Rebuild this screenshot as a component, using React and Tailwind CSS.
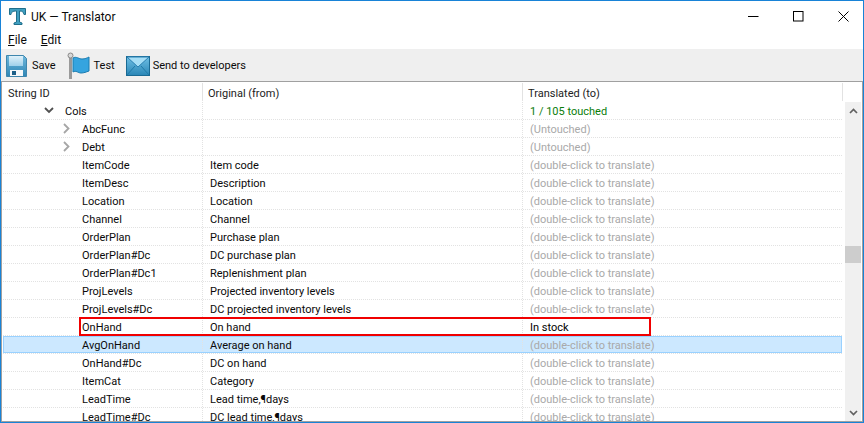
import React from "react";

const rows = [
  { id: "Cols", orig: "", tr: "1 / 105 touched", indent: "pl-[62px]", chev: "down", kind: "green" },
  { id: "AbcFunc", orig: "", tr: "(Untouched)", chev: "right" },
  { id: "Debt", orig: "", tr: "(Untouched)", chev: "right" },
  { id: "ItemCode", orig: "Item code" },
  { id: "ItemDesc", orig: "Description" },
  { id: "Location", orig: "Location" },
  { id: "Channel", orig: "Channel" },
  { id: "OrderPlan", orig: "Purchase plan" },
  { id: "OrderPlan#Dc", orig: "DC purchase plan" },
  { id: "OrderPlan#Dc1", orig: "Replenishment plan" },
  { id: "ProjLevels", orig: "Projected inventory levels" },
  { id: "ProjLevels#Dc", orig: "DC projected inventory levels" },
  { id: "OnHand", orig: "On hand", tr: "In stock", kind: "done" },
  { id: "AvgOnHand", orig: "Average on hand", selected: true },
  { id: "OnHand#Dc", orig: "DC on hand" },
  { id: "ItemCat", orig: "Category" },
  { id: "LeadTime", orig: "Lead time,¶days" },
  { id: "LeadTime#Dc", orig: "DC lead time,¶days" },
];

function Chevron({ dir }) {
  if (dir === "down")
    return (
      <svg width="10" height="7" viewBox="0 0 10 7" className="absolute left-[41px] top-[5px]">
        <path d="M1 1l4 4 4-4" fill="none" stroke="#505050" strokeWidth="1.8" />
      </svg>
    );
  return (
    <svg width="7" height="11" viewBox="0 0 7 11" className="absolute left-[60px] top-[3px]">
      <path d="M1 1l4.500 4.500L1 10" fill="none" stroke="#a6a6a6" strokeWidth="1.8" />
    </svg>
  );
}

function Row({ r }) {
  const trClass =
    r.kind === "green" ? "text-[#0a7d0a]" : r.kind === "done" ? "text-black" : "text-[#a9a9a9]";
  return (
    <div className="relative h-[18px] w-[839px] shrink-0 border-b border-dotted border-[#e2e2e2]">
      <div
        className={
          "flex h-full items-center " +
          (r.selected ? "bg-[#cce8ff] outline outline-1 -outline-offset-1 outline-[#99d1ff]" : "")
        }
      >
        <div className={"relative flex h-full w-[199px] shrink-0 items-center pt-[2px] " + (r.indent || "pl-[79px]")}>
          {r.chev && <Chevron dir={r.chev} />}
          <span>{r.id}</span>
        </div>
        <div className="flex h-full w-[320px] shrink-0 items-center border-l border-dotted border-[#e2e2e2] pl-[7px] pt-[2px]">
          {r.orig}
        </div>
        <div className={"flex h-full w-[320px] shrink-0 items-center border-l border-dotted border-[#e2e2e2] pl-[7px] pt-[2px] " + trClass}>
          {r.tr || "(double-click to translate)"}
        </div>
      </div>
      {r.kind === "done" && (
        <div className="pointer-events-none absolute left-[76px] top-[-1px] h-[19px] w-[572px] border-2 border-[#f00000]" />
      )}
    </div>
  );
}

export default function App() {
  return (
    <div
      className="flex h-[423px] w-[864px] flex-col overflow-hidden border border-[#1883d7] bg-white text-[11px] leading-none text-[#0a0a0a]"
      style={{ fontFamily: "Roboto, sans-serif" }}
    >
      {/* title bar */}
      <div className="flex h-[30px] shrink-0 items-center pt-[1px]">
        <svg width="17" height="17" viewBox="0 0 17 17" className="ml-[8px]">
          <path
            d="M.5.500h16v6h-1.500c-.5-2.500-1.500-3.500-4.500-3.500v11l2.500 1v1.500h-8V15l2.500-1V3C3.500 3 2.500 4 2 6.500H.5z"
            fill="#3f9fc0"
            stroke="#1f6f8c"
            strokeWidth="1"
          />
        </svg>
        <span className="ml-[5px] text-[12px]">UK — Translator</span>
        <div className="ml-auto flex items-center">
          <svg width="11" height="11" viewBox="0 0 11 11" className="mr-[34px]"><path d="M0 5.500h10.500" stroke="#000" /></svg>
          <svg width="11" height="11" viewBox="0 0 11 11" className="mr-[34px]"><rect x=".5" y=".5" width="9.500" height="9.500" fill="none" stroke="#000" /></svg>
          <svg width="11" height="11" viewBox="0 0 11 11" className="mr-[14px]"><path d="M.5.500l10 10M10.500.500l-10 10" stroke="#000" /></svg>
        </div>
      </div>
      {/* menu */}
      <div className="flex h-[18px] shrink-0 items-center gap-[14px] pl-[7px] text-[12px]">
        <span><span className="underline">F</span>ile</span>
        <span><span className="underline">E</span>dit</span>
      </div>
      {/* toolbar */}
      <div className="flex h-[32px] shrink-0 items-center bg-[#efefef] pl-[5px] pt-[1px]">
        <svg width="21" height="22" viewBox="0 0 21 22">
          <defs>
            <linearGradient id="sv" x1="0" y1="0" x2="0" y2="1">
              <stop offset="0" stopColor="#6db7dc" />
              <stop offset="1" stopColor="#2f86b5" />
            </linearGradient>
            <linearGradient id="sl" x1="0" y1="0" x2="0" y2="1">
              <stop offset="0" stopColor="#dff1fa" />
              <stop offset="1" stopColor="#9fd0ea" />
            </linearGradient>
            <linearGradient id="en" x1="0" y1="0" x2="0" y2="1">
              <stop offset="0" stopColor="#6fc0e6" />
              <stop offset="1" stopColor="#2a86b6" />
            </linearGradient>
          </defs>
          <path d="M.5.500h17l3 3v18H.5z" fill="url(#sv)" stroke="#3f86ad" />
          <rect x="3" y="1" width="14" height="10" fill="url(#sl)" />
          <rect x="4" y="15" width="13" height="6" fill="#f5f8fa" />
          <rect x="6" y="16" width="4" height="4" fill="#1c5f88" />
        </svg>
        <span className="ml-[5px]">Save</span>
        <svg width="23" height="28" viewBox="0 0 23 28" className="ml-[11px]">
          <rect x="2" y="5" width="3" height="22" fill="#9a9a9a" />
          <circle cx="3.500" cy="3.500" r="2.500" fill="#d8d8d8" stroke="#888" />
          <path d="M6 6c3-2 6 1 9 1s5-1 7-2v14c-3 1-5 2-8 2s-5-3-8-1z" fill="#35a4df" stroke="#1b7cb0" />
        </svg>
        <span className="ml-[4px]">Test</span>
        <svg width="24" height="20" viewBox="0 0 24 20" className="ml-[11px]">
          <rect x=".5" y=".5" width="23" height="19" fill="url(#en)" stroke="#1a6a94" />
          <path d="M1 19l8-9M23 19l-8-9" stroke="#1f7aa8" fill="none" />
          <path d="M1 1l11 10L23 1z" fill="#a6def6" stroke="#2a80b2" />
        </svg>
        <span className="ml-[3px]">Send to developers</span>
      </div>
      {/* content */}
      <div className="flex min-h-0 flex-1 border border-[#a0a0a0] pl-[1px] pr-[1px]">
        <div className="flex min-w-0 flex-1 flex-col overflow-hidden">
          <div className="flex h-[20px] shrink-0 items-center text-[#222]">
            <div className="w-[199px] shrink-0 pl-[5px] pt-[2px]">String ID</div>
            <div className="flex h-[18px] w-[320px] shrink-0 items-center border-l border-[#e2e2e2] pl-[5px] pt-[2px]">Original (from)</div>
            <div className="flex h-[18px] w-[320px] shrink-0 items-center border-l border-[#e2e2e2] pl-[5px] pt-[2px]">Translated (to)</div>
            <div className="h-[18px] border-l border-[#e2e2e2]" />
          </div>
          {rows.map((r) => (
            <Row key={r.id} r={r} />
          ))}
        </div>
        {/* scrollbar */}
        <div className="mt-[20px] flex w-[16px] shrink-0 flex-col items-center bg-[#f0f0f0]">
          <div className="flex h-[17px] w-full shrink-0 items-center justify-center">
            <svg width="9" height="6" viewBox="0 0 9 6"><path d="M1 5l3.500-3.500L8 5" fill="none" stroke="#606060" strokeWidth="1.700" /></svg>
          </div>
          <div className="h-[127px] shrink-0" />
          <div className="h-[17px] w-full shrink-0 bg-[#cdcdcd]" />
          <div className="min-h-0 flex-1" />
          <div className="flex h-[17px] w-full shrink-0 items-center justify-center">
            <svg width="9" height="6" viewBox="0 0 9 6"><path d="M1 1l3.500 3.500L8 1" fill="none" stroke="#606060" strokeWidth="1.700" /></svg>
          </div>
        </div>
      </div>
    </div>
  );
}
